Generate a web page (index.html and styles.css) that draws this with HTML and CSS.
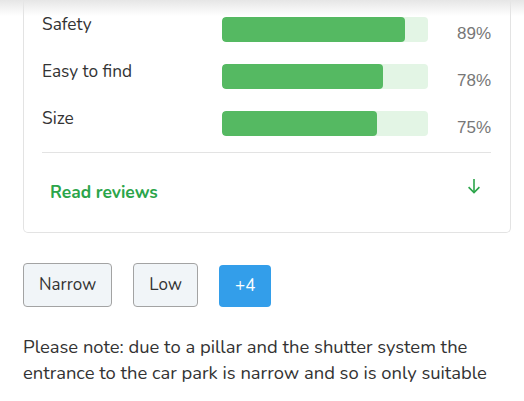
FILE: index.html
```html
<!DOCTYPE html>
<html>
<head>
<meta charset="utf-8">
<link rel="stylesheet" href="styles.css">
</head>
<body>
<div class="top-shadow"></div>
<main class="page">
  <section class="card">
    <div class="ratings">
      <div class="rating">
        <span class="label">Safety</span>
        <div class="track"><div class="fill" style="width:89%"></div></div>
        <span class="pct">89%</span>
      </div>
      <div class="rating">
        <span class="label">Easy to find</span>
        <div class="track"><div class="fill" style="width:78%"></div></div>
        <span class="pct">78%</span>
      </div>
      <div class="rating">
        <span class="label">Size</span>
        <div class="track"><div class="fill" style="width:75%"></div></div>
        <span class="pct">75%</span>
      </div>
    </div>
    <div class="reviews">
      <span class="reviews-link">Read reviews</span>
      <svg class="arrow" width="16" height="16" viewBox="0 0 16 16" fill="none" stroke="currentColor" stroke-width="1.6">
        <path d="M8 1V14.5"/>
        <path d="M2.6 9.1L8 14.5L13.4 9.1"/>
      </svg>
    </div>
  </section>

  <div class="tags">
    <span class="tag">Narrow</span>
    <span class="tag">Low</span>
    <span class="tag more">+4</span>
  </div>

  <p class="note">Please note: due to a pillar and the shutter system the entrance to the car park is narrow and so is only suitable</p>
</main>
</body>
</html>
```

FILE: styles.css
```css
html, body {
  margin: 0;
  padding: 0;
  background: #fff;
  overflow: hidden;
}
body {
  font-family: "Nunito", "Lato", "Noto Sans", sans-serif;
  color: #333;
  height: 401px;
}
.top-shadow {
  position: absolute;
  left: 0;
  top: 0;
  right: 0;
  height: 16px;
  background: linear-gradient(to bottom, #e6e6e6, rgba(255,255,255,0));
  pointer-events: none;
}
.page {
  padding: 0 13px 0 23px;
}
.card {
  border: 1px solid #e3e3e3;
  border-top: 0;
  border-radius: 0 0 5px 5px;
  padding: 17px 19px 0 18px;
}
.ratings {
  display: flex;
  flex-direction: column;
  gap: 22px;
  padding-bottom: 16px;
  border-bottom: 1px solid #e3e3e3;
}
.rating {
  display: grid;
  grid-template-columns: 180px 206px 1fr;
  align-items: stretch;
}
.label {
  font-size: 17.3px;
  line-height: 16px;
  color: #333;
}
.track {
  height: 25px;
  background: #e3f5e5;
  border-radius: 4px;
  overflow: hidden;
}
.fill {
  height: 100%;
  background: #55b962;
  border-radius: 4px;
}
.pct {
  align-self: end;
  text-align: right;
  font-family: "Liberation Sans", Arial, sans-serif;
  font-size: 17px;
  line-height: 17px;
  color: #777;
  margin-bottom: 0;
}
.reviews {
  display: flex;
  justify-content: space-between;
  align-items: flex-start;
  padding: 27px 9px 28px 8px;
  color: #2ba54a;
}
.reviews-link {
  font-weight: 700;
  font-size: 17.4px;
  line-height: 24px;
}
.arrow {
  margin-top: -2px;
}
.tags {
  display: flex;
  gap: 21px;
  margin-top: 30px;
  align-items: flex-start;
}
.tag {
  display: inline-block;
  box-sizing: border-box;
  height: 44px;
  line-height: 42px;
  padding: 0 15px;
  font-size: 17px;
  border: 1px solid #a3a3a3;
  border-radius: 4px;
  background: #f1f5f8;
  color: #333;
}
.tag.more {
  border: 0;
  line-height: 42px;
  height: 42px;
  margin-top: 2px;
  padding: 0 16px;
  background: #339eea;
  color: #fff;
}
.note {
  margin: 27px 0 0;
  font-size: 18.4px;
  line-height: 26px;
  color: #333;
}
```
